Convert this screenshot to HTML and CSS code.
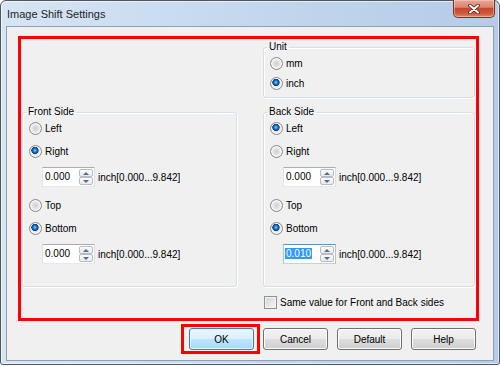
FILE: index.html
```html
<!DOCTYPE html>
<html lang="en">
<head>
  <meta charset="UTF-8" />
  <title>Image Shift Settings</title>
  <link rel="stylesheet" href="styles.css">
</head>
<body>
  <div class="window">
    <div class="titlebar">
      <span class="title">Image Shift Settings</span>
      <button class="close" type="button" aria-label="Close">
        <svg width="12" height="10" viewBox="0 0 12 10">
          <path d="M2 1.5 L10 8.5 M10 1.5 L2 8.5" stroke="#5a1d14" stroke-width="3.6" stroke-linecap="round" fill="none" />
          <path d="M2 1.5 L10 8.5 M10 1.5 L2 8.5" stroke="#ffffff" stroke-width="2" stroke-linecap="round" fill="none" />
        </svg>
      </button>
    </div>

    <div class="client">
      <!-- red marker around the settings area -->
      <div class="highlight">
        <fieldset class="group unit">
          <legend>Unit</legend>
          <div class="group-body">
            <label class="opt"><input type="radio" name="unit"> mm</label>
            <label class="opt opt-inch"><input type="radio" name="unit" checked> inch</label>
          </div>
        </fieldset>

        <fieldset class="group front">
          <legend>Front Side</legend>
          <div class="group-body">
            <label class="opt"><input type="radio" name="fh"> Left</label>
            <label class="opt gap7"><input type="radio" name="fh" checked> Right</label>
            <div class="spin-row">
              <div class="spin"><span class="spin-text">0.000</span><span class="spin-btns"><span class="up"></span><span class="down"></span></span></div>
              <span>inch[0.000...9.842]</span>
            </div>
            <label class="opt gap10"><input type="radio" name="fv"> Top</label>
            <label class="opt gap7"><input type="radio" name="fv" checked> Bottom</label>
            <div class="spin-row">
              <div class="spin"><span class="spin-text">0.000</span><span class="spin-btns"><span class="up"></span><span class="down"></span></span></div>
              <span>inch[0.000...9.842]</span>
            </div>
          </div>
        </fieldset>

        <fieldset class="group back">
          <legend>Back Side</legend>
          <div class="group-body">
            <label class="opt"><input type="radio" name="bh" checked> Left</label>
            <label class="opt gap7"><input type="radio" name="bh"> Right</label>
            <div class="spin-row">
              <div class="spin"><span class="spin-text">0.000</span><span class="spin-btns"><span class="up"></span><span class="down"></span></span></div>
              <span>inch[0.000...9.842]</span>
            </div>
            <label class="opt gap10"><input type="radio" name="bv"> Top</label>
            <label class="opt gap7"><input type="radio" name="bv" checked> Bottom</label>
            <div class="spin-row">
              <div class="spin focused"><span class="spin-text"><span class="sel">0.010</span></span><span class="spin-btns"><span class="up"></span><span class="down"></span></span></div>
              <span>inch[0.000...9.842]</span>
            </div>
          </div>
        </fieldset>

        <label class="check"><input type="checkbox"> Same value for Front and Back sides</label>
      </div>

      <div class="buttons">
        <div class="ok-mark"><button class="btn btn-default" type="button">OK</button></div>
        <button class="btn" type="button">Cancel</button>
        <button class="btn" type="button">Default</button>
        <button class="btn" type="button">Help</button>
      </div>
    </div>
  </div>
</body>
</html>
```

FILE: styles.css
```css
* {
  box-sizing: border-box;
}
html, body {
  margin: 0;
  padding: 0;
  background-color: #ffffff;
}
body {
  font-family: 'Liberation Sans', Arial, sans-serif;
  font-size: 10px;
  color: #000000;
}
.window {
  width: 500px;
  height: 365px;
  border: 1px solid #4f555c;
  border-radius: 6px 6px 3px 3px;
  background: linear-gradient(to right, #d6e5f4 0%, #c2d6ed 55%, #b4cce8 100%);
  box-shadow: inset 0 0 0 1px rgba(255, 255, 255, 0.6);
  display: flex;
  flex-direction: column;
}
.titlebar {
  height: 25px;
  display: flex;
  align-items: flex-start;
  padding-left: 6px;
}
.title {
  font-size: 11px;
  line-height: 26px;
  color: #1e1e1e;
}
.close {
  margin: -1px 4px 0 auto;
  width: 42px;
  height: 18px;
  padding: 0;
  border: 1px solid #7b3027;
  border-top: none;
  border-radius: 0 0 5px 5px;
  background: linear-gradient(#e9a797 0%, #dc8572 42%, #c4472f 50%, #cd5a3f 80%, #de8a66 100%);
  box-shadow: inset 0 0 0 1px rgba(255, 220, 210, 0.45);
  display: flex;
  align-items: center;
  justify-content: center;
}
.close svg {
  display: block;
}
.client {
  flex: 1;
  margin: 0 5px 3px;
  border: 1px solid #8fa0b5;
  background-color: #f0f0f0;
}
.highlight {
  margin: 9px 14px 0 11px;
  border: 3px solid #ff0000;
  padding: 2px 1px 9px 1px;
  display: grid;
  grid-template-columns: 215px 212px;
  grid-template-areas:
    ". unit"
    "front back"
    ". check";
  column-gap: 26px;
  row-gap: 8px;
}
.group {
  margin: 0;
  padding: 0;
  min-width: 0;
  border: 1px solid #d5dfe5;
  border-radius: 3px;
  box-shadow: inset 1px 1px 0 #ffffff, 1px 1px 0 #ffffff;
}
.group legend {
  margin-left: 3px;
  padding: 0 2px;
  line-height: 12px;
}
.group-body {
  padding: 2px 0 0 6px;
  display: flex;
  flex-direction: column;
}
.unit {
  grid-area: unit;
}
.unit .group-body {
  padding-bottom: 6px;
}
.front {
  grid-area: front;
}
.back {
  grid-area: back;
}
.front .group-body,
.back .group-body {
  padding-bottom: 22px;
}
.opt {
  height: 16px;
  display: flex;
  align-items: center;
  gap: 3px;
}
.opt-inch {
  margin-top: 4px;
}
.gap7 {
  margin-top: 7px;
}
.gap10 {
  margin-top: 10px;
}
input[type="radio"] {
  appearance: none;
  -webkit-appearance: none;
  margin: 0;
  width: 13px;
  height: 13px;
  border: 1px solid #8a8b8c;
  border-radius: 50%;
  background: radial-gradient(circle at 50% 50%, #cfcfcf 0, #e2e2e2 3px, #f6f6f6 5px, #d6d6d6 6px);
}
input[type="radio"]:checked {
  background:
    radial-gradient(circle at 45% 40%, #8fd3fa 0, #2a7fd2 1.6px, #0f5aa8 2.6px, #0b3f7a 3.4px, rgba(11, 63, 122, 0) 3.9px),
    radial-gradient(circle at 50% 50%, #cfcfcf 0, #e2e2e2 3px, #f6f6f6 5px, #d6d6d6 6px);
}
.spin-row {
  margin: 8px 0 0 13px;
  display: flex;
  align-items: center;
  gap: 3px;
}
.spin {
  width: 53px;
  height: 20px;
  background-color: #ffffff;
  border: 1px solid;
  border-color: #abadb3 #dbdfe6 #e3e9ef #e2e3ea;
  display: flex;
  align-items: center;
  padding: 1px 1px 1px 2px;
}
.spin.focused {
  border-color: #5c93bc #a4c6e3 #b7d5ef #a4c6e3;
}
.spin-text {
  flex: 1;
  line-height: 14px;
}
.sel {
  background-color: #3399ff;
  color: #ffffff;
  padding: 0 1px;
  margin-left: -1px;
}
.spin-btns {
  width: 14px;
  height: 16px;
  display: flex;
  flex-direction: column;
}
.spin-btns span {
  flex: 1;
  border: 1px solid #b9bdc3;
  border-radius: 2px;
  background: linear-gradient(#fbfbfb, #e9e9ea);
  display: flex;
  align-items: center;
  justify-content: center;
}
.spin-btns .up::after,
.spin-btns .down::after {
  content: "";
  width: 0;
  height: 0;
  border-left: 3px solid transparent;
  border-right: 3px solid transparent;
}
.spin-btns .up::after {
  border-bottom: 3px solid #4f6d93;
}
.spin-btns .down::after {
  border-top: 3px solid #4f6d93;
}
.check {
  grid-area: check;
  height: 14px;
  display: flex;
  align-items: center;
  gap: 3px;
  padding-left: 1px;
}
input[type="checkbox"] {
  appearance: none;
  -webkit-appearance: none;
  margin: 0;
  width: 13px;
  height: 13px;
  border: 1px solid #8e8f8f;
  background: linear-gradient(135deg, #cfd3d8, #f6f6f6);
  box-shadow: inset 0 0 0 1px #f4f4f4;
}
.buttons {
  margin-top: 3px;
  padding-right: 17px;
  display: flex;
  justify-content: flex-end;
  align-items: center;
  gap: 9px;
}
.ok-mark {
  border: 3px solid #ff0000;
  padding: 1px 3px 1px 5px;
  margin-right: -6px;
}
.btn {
  width: 65px;
  height: 22px;
  padding: 0;
  font-family: 'Liberation Sans', Arial, sans-serif;
  font-size: 10px;
  color: #000000;
  border: 1px solid #707070;
  border-radius: 3px;
  background: linear-gradient(#f2f2f2 0%, #ebebeb 50%, #dddddd 51%, #cfcfcf 100%);
  box-shadow: inset 0 0 0 1px #fcfcfc;
  display: block;
}
.btn-default {
  border-color: #3c7fb1;
  background: linear-gradient(#eaf6fd 0%, #d9f0fc 50%, #bee6fd 51%, #a7d9f5 100%);
  box-shadow: inset 0 0 0 1px #e3f4fd;
}
```
